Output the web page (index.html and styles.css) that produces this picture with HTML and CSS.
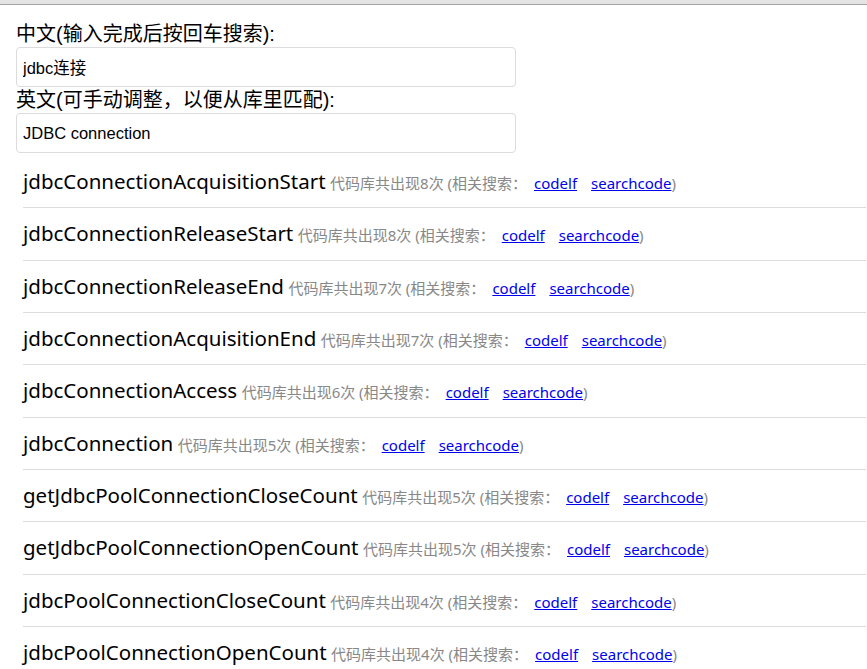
FILE: index.html
```html
<!DOCTYPE html>
<html lang="zh">
<head>
<meta charset="utf-8">
<title>jdbc连接</title>
<link rel="stylesheet" href="styles.css">
</head>
<body>
<div class="topbar"></div>
<div class="page">
  <div class="label">中文(输入完成后按回车搜索):</div>
  <input class="field" type="text" value="jdbc连接">
  <div class="label">英文(可手动调整，以便从库里匹配):</div>
  <input class="field" type="text" value="JDBC connection">
  <ul class="results">
    <li class="row"><span class="name">jdbcConnectionAcquisitionStart</span> <span class="meta">代码库共出现8次 (相关搜索：<a href="#">codelf</a><a href="#">searchcode</a>)</span></li>
    <li class="row"><span class="name">jdbcConnectionReleaseStart</span> <span class="meta">代码库共出现8次 (相关搜索：<a href="#">codelf</a><a href="#">searchcode</a>)</span></li>
    <li class="row"><span class="name">jdbcConnectionReleaseEnd</span> <span class="meta">代码库共出现7次 (相关搜索：<a href="#">codelf</a><a href="#">searchcode</a>)</span></li>
    <li class="row"><span class="name">jdbcConnectionAcquisitionEnd</span> <span class="meta">代码库共出现7次 (相关搜索：<a href="#">codelf</a><a href="#">searchcode</a>)</span></li>
    <li class="row"><span class="name">jdbcConnectionAccess</span> <span class="meta">代码库共出现6次 (相关搜索：<a href="#">codelf</a><a href="#">searchcode</a>)</span></li>
    <li class="row"><span class="name">jdbcConnection</span> <span class="meta">代码库共出现5次 (相关搜索：<a href="#">codelf</a><a href="#">searchcode</a>)</span></li>
    <li class="row"><span class="name">getJdbcPoolConnectionCloseCount</span> <span class="meta">代码库共出现5次 (相关搜索：<a href="#">codelf</a><a href="#">searchcode</a>)</span></li>
    <li class="row"><span class="name">getJdbcPoolConnectionOpenCount</span> <span class="meta">代码库共出现5次 (相关搜索：<a href="#">codelf</a><a href="#">searchcode</a>)</span></li>
    <li class="row"><span class="name">jdbcPoolConnectionCloseCount</span> <span class="meta">代码库共出现4次 (相关搜索：<a href="#">codelf</a><a href="#">searchcode</a>)</span></li>
    <li class="row"><span class="name">jdbcPoolConnectionOpenCount</span> <span class="meta">代码库共出现4次 (相关搜索：<a href="#">codelf</a><a href="#">searchcode</a>)</span></li>
  </ul>
</div>
</body>
</html>
```
FILE: styles.css
```css
html, body {
  margin: 0;
  padding: 0;
  background: #fff;
}
body {
  font-family: "Liberation Sans", "Noto Sans CJK SC", sans-serif;
  color: #000;
  overflow: hidden;
}
.topbar {
  height: 4px;
  background: #e4e4e4;
  border-bottom: 1px solid #a3a3a3;
}
.page {
  padding: 16px 0 0 16px;
}
.label {
  font-size: 20px;
  line-height: 26px;
  height: 26px;
  white-space: nowrap;
}
.field {
  display: block;
  box-sizing: border-box;
  width: 500px;
  height: 40px;
  margin: 0;
  padding: 0 6px;
  border: 1px solid #dcdcdc;
  border-radius: 4px;
  font-family: "Liberation Sans", "Noto Sans CJK SC", sans-serif;
  font-size: 16.5px;
  color: #000;
  background: #fff;
  outline: none;
}
.results {
  list-style: none;
  margin: 3px 0 0 7px;
  padding: 0;
}
.row {
  box-sizing: content-box;
  height: 31.33px;
  padding: 10px 0;
  line-height: 31.33px;
  border-bottom: 1px solid #dddddd;
  white-space: nowrap;
  margin-right: 1px;
  overflow: visible;
}
.name {
  font-family: "Noto Sans", "Noto Sans CJK SC", sans-serif;
  font-size: 20.5px;
  color: #000;
}
.meta {
  font-family: "Noto Sans", "Noto Sans CJK SC", sans-serif;
  font-size: 15px;
  color: #888;
}
.meta a {
  color: #0000ee;
  text-decoration: underline;
  margin-left: 7px;
}
.meta a + a {
  margin-left: 14px;
}
```
